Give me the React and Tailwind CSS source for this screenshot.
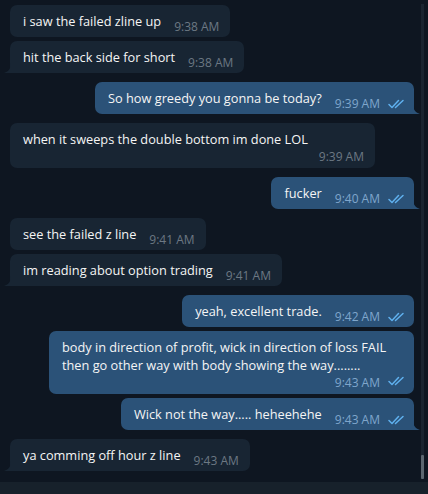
import React from "react";

const messages = [
  { out: false, text: "i saw the failed zline up", time: "9:38 AM", mt: "mt-[5px]" },
  { out: false, text: "hit the back side for short", time: "9:38 AM", mt: "mt-[4px]", tail: true },
  { out: true, text: "So how greedy you gonna be today?", time: "9:39 AM", mt: "mt-[9px]", tail: true },
  { out: false, text: "when it sweeps the double bottom im done LOL", time: "9:39 AM", mt: "mt-[9px]", wide: true },
  { out: true, text: "fucker", time: "9:40 AM", mt: "mt-[9px]", tail: true },
  { out: false, text: "see the failed z line", time: "9:41 AM", mt: "mt-[9px]" },
  { out: false, text: "im reading about option trading", time: "9:41 AM", mt: "mt-[4px]", tail: true },
  { out: true, text: "yeah, excellent trade.", time: "9:42 AM", mt: "mt-[9px]" },
  {
    out: true,
    text: "body in direction of profit, wick in direction of loss FAIL then go other way with body showing the way........",
    time: "9:43 AM",
    mt: "mt-[4px]",
    wide: true,
  },
  { out: true, text: "Wick not the way..... heheehehe", time: "9:43 AM", mt: "mt-[4px]", tail: true },
  { out: false, text: "ya comming off hour z line", time: "9:43 AM", mt: "mt-[9px]", tail: true },
];

const Checks = () => (
  <svg width="18" height="10" viewBox="0 0 18 10" fill="none" className="ml-[8px] mt-[10px] shrink-0">
    <path d="M1 5.5 L4 8.5 L10.5 1.5" stroke="#5fb0ee" strokeWidth="1.5" strokeLinecap="round" strokeLinejoin="round" />
    <path d="M7.5 8.5 L15 1.5" stroke="#5fb0ee" strokeWidth="1.5" strokeLinecap="round" />
  </svg>
);

const Tail = ({ out }) =>
  out ? (
    <svg width="7" height="10" viewBox="0 0 7 10" className="absolute bottom-0 right-[-6px]">
      <path d="M0 0 C0 5 2 8.5 7 10 L0 10 Z" fill="#2b5278" />
    </svg>
  ) : (
    <svg width="7" height="10" viewBox="0 0 7 10" className="absolute bottom-0 left-[-6px]">
      <path d="M7 0 C7 5 5 8.5 0 10 L7 10 Z" fill="#182533" />
    </svg>
  );

const Bubble = ({ m }) => {
  const bg = m.out ? "bg-[#2b5278]" : "bg-[#182533]";
  const timeColor = m.out ? "text-[#7fa6cc]" : "text-[#6c7883]";
  const corner = m.tail ? (m.out ? "rounded-br-none" : "rounded-bl-none") : "";
  return (
    <div className={`flex ${m.out ? "justify-end" : "justify-start"} ${m.mt}`}>
      <div
        className={`relative rounded-[7px] ${corner} ${bg} ${m.out ? "pr-[8px]" : "pr-[11px]"} pl-[13px] pt-[7px] ${
          m.wide ? "w-[365px] pb-[5px]" : "pb-[4px]"
        }`}
      >
        {m.wide ? (
          <div>
            <div className="text-[12.75px] leading-[18px] text-[#f5f5f5]">{m.text}</div>
            <div className="flex justify-end items-start mt-[-8px]">
              <span className={`text-[12px] leading-[13px] ${timeColor} mt-[10px]`}>{m.time}</span>
              {m.out && <Checks />}
            </div>
          </div>
        ) : (
          <div className="flex items-start">
            <span className="text-[12.75px] leading-[18px] text-[#f5f5f5] whitespace-nowrap">{m.text}</span>
            <span className={`ml-[13px] text-[12px] leading-[13px] ${timeColor} mt-[8px] whitespace-nowrap`}>{m.time}</span>
            {m.out && <Checks />}
          </div>
        )}
        {m.tail && <Tail out={m.out} />}
      </div>
    </div>
  );
};

export default function App() {
  return (
    <div
      className="w-[428px] h-[494px] overflow-hidden bg-[#0e1621] flex flex-col"
      style={{ fontFamily: '"Open Sans", "Noto Sans", sans-serif' }}
    >
      <div className="flex flex-1 min-h-0">
        <div className="flex-1 pl-[10px] pr-[7px]">
          {messages.map((m, i) => (
            <Bubble key={i} m={m} />
          ))}
        </div>
        <div className="w-[7px] flex justify-start pt-[4px] pb-[3px]">
          <div className="w-[3px] h-full bg-[#1a2430] flex flex-col justify-end">
            <div className="h-[24px] w-full bg-[#5b6670] rounded-[1px]" />
          </div>
        </div>
      </div>
      <div className="h-[12px] bg-[#17212b]" />
    </div>
  );
}
